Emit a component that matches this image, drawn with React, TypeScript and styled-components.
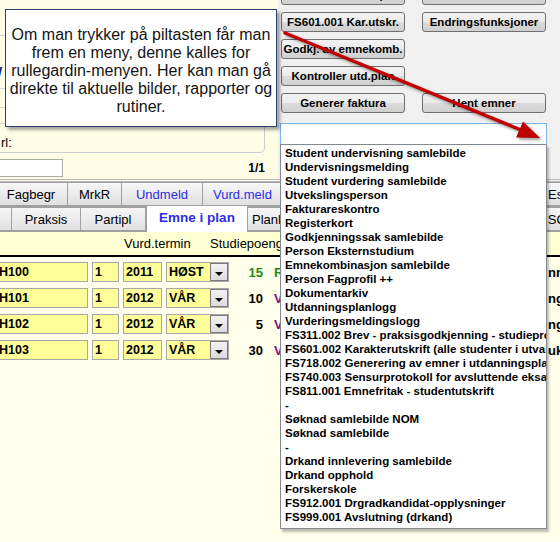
import React from "react";
import styled, { createGlobalStyle } from "styled-components";

const GlobalStyle = createGlobalStyle`
  html, body {
    margin: 0;
    padding: 0;
  }
  body {
    width: 560px;
    height: 542px;
    overflow: hidden;
    background: #fffeea;
    font-family: "Liberation Sans", Arial, sans-serif;
  }
`;

const Screen = styled.div`
  position: relative;
  width: 560px;
  height: 542px;
  overflow: hidden;
  display: flex;
  flex-direction: column;
  background: #fffeea;
`;

const Top = styled.div`
  display: grid;
  grid-template-columns: 278px 1fr;
  height: 182px;
  flex: none;
`;

const LeftPane = styled.div`
  background: #fffde6;
  display: flex;
  flex-direction: column;
  padding-top: 35px;
  border-bottom: 3px double #b9b9b9;
  box-sizing: border-box;
`;

const InfoPanel = styled.div`
  margin-left: -2px;
  width: 267px;
  height: 118px;
  box-sizing: border-box;
  border: 1px solid #c9ced6;
  border-radius: 0 0 5px 0;
  display: flex;
  flex-direction: column;
`;

const PanelRow = styled.div<{ $h: number; $last?: boolean }>`
  height: ${(p) => p.$h}px;
  flex: none;
  box-sizing: border-box;
  border-bottom: ${(p) => (p.$last ? "none" : "1px solid #d4d8de")};
  display: flex;
  align-items: flex-end;
  padding: 0 0 2px 2px;
  font-size: 13px;
  color: #000;
`;

const NavyLabel = styled.span`
  margin-left: -12px;
  margin-bottom: 6px;
  font-weight: bold;
  font-size: 14px;
  color: #1c2a5a;
`;

const PagerRow = styled.div`
  flex: 1;
  display: flex;
  align-items: center;
  justify-content: space-between;
  padding: 3px 13px 0 0;
`;

const PageInput = styled.div`
  margin-left: -2px;
  width: 65px;
  height: 18px;
  box-sizing: border-box;
  background: #fff;
  border: 1px solid #a9a9a9;
`;

const PageCount = styled.span`
  font-weight: bold;
  font-size: 12px;
  color: #000;
`;

const RightPane = styled.div`
  background: #f0f0f0;
  padding-left: 3px;
  display: flex;
  flex-direction: column;
  border-bottom: 3px double #b9b9b9;
  box-sizing: border-box;
`;

const ButtonGrid = styled.div`
  margin-top: -15px;
  display: grid;
  grid-template-columns: 124px 124px;
  grid-auto-rows: 20px;
  column-gap: 17px;
  row-gap: 7px;
`;

const FsButton = styled.div`
  box-sizing: border-box;
  border: 1px solid #707070;
  border-radius: 3px;
  background: linear-gradient(#f3f3f3 0%, #ebebeb 48%, #dcdcdc 52%, #cfcfcf 100%);
  display: flex;
  align-items: center;
  justify-content: center;
  font-weight: bold;
  font-size: 11.5px;
  color: #000;
  white-space: nowrap;
  overflow: hidden;
`;

const Combo = styled.div`
  position: relative;
  margin-top: 10px;
  margin-left: -1px;
  width: 267px;
  height: 22px;
  box-sizing: border-box;
  background: #fff;
  border: 1px solid #7fb4e6;
  z-index: 5;
`;

const DropList = styled.ul`
  position: absolute;
  top: 100%;
  left: -1px;
  width: 267px;
  margin: 0;
  padding: 1px 0 4px 4px;
  box-sizing: border-box;
  list-style: none;
  background: #fff;
  border: 1px solid #828790;
  box-shadow: 2px 3px 2px rgba(0, 0, 0, 0.25);
  overflow: hidden;
`;

const DropItem = styled.li`
  height: 14px;
  line-height: 14px;
  font-weight: bold;
  font-size: 11.5px;
  color: #000;
  white-space: nowrap;
`;

const TabRow = styled.div<{ $h: number }>`
  display: flex;
  align-items: flex-end;
  height: ${(p) => p.$h}px;
  flex: none;
  background: #f0f0f0;
  border-bottom: 1px solid #a0a0a0;
  box-sizing: border-box;
`;

const Tab = styled.div<{ $w: number; $blue?: boolean; $active?: boolean; $offset?: number }>`
  flex: none;
  width: ${(p) => p.$w}px;
  margin-left: ${(p) => p.$offset ?? 0}px;
  height: ${(p) => (p.$active ? "calc(100% + 3px)" : "100%")};
  margin-bottom: ${(p) => (p.$active ? "-1px" : "0")};
  box-sizing: border-box;
  border: 1px solid #a0a0a0;
  border-bottom: ${(p) => (p.$active ? "none" : "1px solid #a0a0a0")};
  border-left-width: ${(p) => (p.$active ? "1px" : "0")};
  background: ${(p) =>
    p.$active ? "#fff" : "linear-gradient(#f6f6f6 0%, #ececec 50%, #e0e0e0 100%)"};
  display: flex;
  align-items: center;
  justify-content: center;
  font-size: 13px;
  font-weight: ${(p) => (p.$active ? "bold" : "normal")};
  color: ${(p) => (p.$blue || p.$active ? "#2d2de6" : "#000")};
  white-space: nowrap;
  overflow: hidden;
  ${(p) => (p.$active ? "font-size: 13.5px; padding-bottom: 3px;" : "")}
`;

const HeaderRow = styled.div`
  flex: none;
  height: 25px;
  box-sizing: border-box;
  background: #ffffd4;
  border-bottom: 2px solid #000;
  display: flex;
  align-items: center;
  padding-left: 124px;
  font-size: 13px;
  color: #000;
`;

const HeaderCell = styled.span<{ $w?: number }>`
  width: ${(p) => (p.$w ? `${p.$w}px` : "auto")};
  white-space: nowrap;
`;

const Rows = styled.div`
  display: flex;
  flex-direction: column;
  gap: 6px;
  padding-top: 5px;
`;

const Row = styled.div`
  display: flex;
  align-items: center;
  gap: 4px;
  height: 20px;
`;

const Field = styled.div<{ $w: number; $offset?: number }>`
  position: relative;
  flex: none;
  width: ${(p) => p.$w}px;
  margin-left: ${(p) => p.$offset ?? 0}px;
  height: 20px;
  box-sizing: border-box;
  background: #ffff99;
  border: 1px solid #a8a8a8;
  padding-left: 2px;
  display: flex;
  align-items: center;
  font-weight: bold;
  font-size: 12.5px;
  color: #000;
`;

const DropButton = styled.div`
  margin-left: auto;
  width: 18px;
  height: 18px;
  box-sizing: border-box;
  background: linear-gradient(#f2f2f2, #dcdcdc);
  border: 1px solid #7a7a7a;
  display: flex;
  align-items: center;
  justify-content: center;
  padding-top: 3px;
`;

const DownTriangle = styled.span`
  width: 0;
  height: 0;
  border-left: 4px solid transparent;
  border-right: 4px solid transparent;
  border-top: 4px solid #000;
`;

const Points = styled.div<{ $green?: boolean }>`
  flex: none;
  width: 30px;
  text-align: right;
  font-weight: bold;
  font-size: 13px;
  color: ${(p) => (p.$green ? "#1b8a1b" : "#000")};
`;

const Status = styled.div<{ $green?: boolean }>`
  flex: none;
  margin-left: 7px;
  font-weight: bold;
  font-size: 13px;
  color: ${(p) => (p.$green ? "#1b8a1b" : "#8a0a8a")};
`;

const Tail = styled.div`
  margin-left: auto;
  width: 12px;
  overflow: hidden;
  white-space: nowrap;
  font-weight: bold;
  font-size: 13px;
  color: #000;
`;

const Callout = styled.div`
  position: absolute;
  left: 5px;
  top: 9px;
  width: 272px;
  height: 118px;
  box-sizing: border-box;
  background: #fff;
  border: 1.5px solid #2b4170;
  box-shadow: 3px 3px 3px rgba(0, 0, 0, 0.35);
  padding-top: 16px;
  text-align: center;
  font-size: 16px;
  line-height: 18px;
  color: #141414;
  white-space: nowrap;
  z-index: 10;
`;

const ArrowSvg = styled.svg`
  position: absolute;
  left: 278px;
  top: 25px;
  width: 272px;
  height: 122px;
  overflow: visible;
  filter: drop-shadow(2px 2px 1.5px rgba(0, 0, 0, 0.4));
  z-index: 11;
`;

const buttons = [
  "FS601.001 Kar.utskr.",
  "Endringsfunksjoner",
  "Godkj. av emnekomb.",
  "",
  "Kontroller utd.plan",
  "",
  "Generer faktura",
  "Hent emner",
];

const menuItems = [
  "Student undervisning samlebilde",
  "Undervisningsmelding",
  "Student vurdering samlebilde",
  "Utvekslingsperson",
  "Fakturareskontro",
  "Registerkort",
  "Godkjenningssak samlebilde",
  "Person Eksternstudium",
  "Emnekombinasjon samlebilde",
  "Person Fagprofil ++",
  "Dokumentarkiv",
  "Utdanningsplanlogg",
  "Vurderingsmeldingslogg",
  "FS311.002 Brev - praksisgodkjenning - studieprogram",
  "FS601.002 Karakterutskrift (alle studenter i utvalget)",
  "FS718.002 Generering av emner i utdanningsplan",
  "FS740.003 Sensurprotokoll for avsluttende eksamen",
  "FS811.001 Emnefritak - studentutskrift",
  "-",
  "Søknad samlebilde NOM",
  "Søknad samlebilde",
  "-",
  "Drkand innlevering samlebilde",
  "Drkand opphold",
  "Forskerskole",
  "FS912.001 Drgradkandidat-opplysninger",
  "FS999.001 Avslutning (drkand)",
];

const planRows = [
  { code: "H100", nr: "1", year: "2011", term: "HØST", sp: "15", st: "R", tail: "nn" },
  { code: "H101", nr: "1", year: "2012", term: "VÅR", sp: "10", st: "V", tail: "ng" },
  { code: "H102", nr: "1", year: "2012", term: "VÅR", sp: "5", st: "V", tail: "ng" },
  { code: "H103", nr: "1", year: "2012", term: "VÅR", sp: "30", st: "V", tail: "uk" },
];

export default function App() {
  return (
    <>
      <GlobalStyle />
      <Screen>
        <Top>
          <LeftPane>
            <InfoPanel>
              <PanelRow $h={53}>
                <NavyLabel>W</NavyLabel>
              </PanelRow>
              <PanelRow $h={19} />
              <PanelRow $h={16} />
              <PanelRow $h={28} $last>
                rl:
              </PanelRow>
            </InfoPanel>
            <PagerRow>
              <PageInput />
              <PageCount>1/1</PageCount>
            </PagerRow>
          </LeftPane>
          <RightPane>
            <ButtonGrid>
              <FsButton>FS740.001 Sensurprot.</FsButton>
              <FsButton>Studentutskrift</FsButton>
              {buttons.map((b, i) =>
                b ? <FsButton key={i}>{b}</FsButton> : <span key={i} />
              )}
            </ButtonGrid>
            <Combo>
              <DropList>
                {menuItems.map((m, i) => (
                  <DropItem key={i}>{m}</DropItem>
                ))}
              </DropList>
            </Combo>
          </RightPane>
        </Top>

        <TabRow $h={25}>
          <Tab $w={73} $offset={-5}>Fagbegr</Tab>
          <Tab $w={54}>MrkR</Tab>
          <Tab $w={81} $blue>Undmeld</Tab>
          <Tab $w={80} $blue>Vurd.meld</Tab>
          <Tab $w={85}>Vurd.komb</Tab>
          <Tab $w={90}>Resultat</Tab>
          <Tab $w={85}>Privatist</Tab>
          <Tab $w={40}>Esak</Tab>
        </TabRow>
        <TabRow $h={25}>
          <Tab $w={30} $offset={-18} />
          <Tab $w={69}>Praksis</Tab>
          <Tab $w={65}>Partipl</Tab>
          <Tab $w={102} $active>Emne i plan</Tab>
          <Tab $w={56}>Planlagt</Tab>
          <Tab $w={100}>Utveksling</Tab>
          <Tab $w={140}>Kvalifikasjon</Tab>
          <Tab $w={36}>SOS</Tab>
        </TabRow>

        <HeaderRow>
          <HeaderCell $w={86}>Vurd.termin</HeaderCell>
          <HeaderCell>Studiepoeng</HeaderCell>
        </HeaderRow>

        <Rows>
          {planRows.map((r) => (
            <Row key={r.code}>
              <Field $w={92} $offset={-4}>
                {r.code}
              </Field>
              <Field $w={27}>{r.nr}</Field>
              <Field $w={39}>{r.year}</Field>
              <Field $w={63}>
                {r.term}
                <DropButton>
                  <DownTriangle />
                </DropButton>
              </Field>
              <Points $green={r.st === "R"}>{r.sp}</Points>
              <Status $green={r.st === "R"}>{r.st}</Status>
              <Tail>{r.tail}</Tail>
            </Row>
          ))}
        </Rows>

        <Callout>
          Om man trykker på piltasten får man
          <br />
          frem en meny, denne kalles for
          <br />
          rullegardin-menyen. Her kan man gå
          <br />
          direkte til aktuelle bilder, rapporter og
          <br />
          rutiner.
        </Callout>

        <ArrowSvg viewBox="278 25 272 122">
          <line
            x1={285}
            y1={33}
            x2={521}
            y2={130}
            stroke="#c00000"
            strokeWidth={3.5}
            strokeLinecap="round"
          />
          <polygon points="540,138 516,137.5 523,121.5" fill="#c00000" />
        </ArrowSvg>
      </Screen>
    </>
  );
}
